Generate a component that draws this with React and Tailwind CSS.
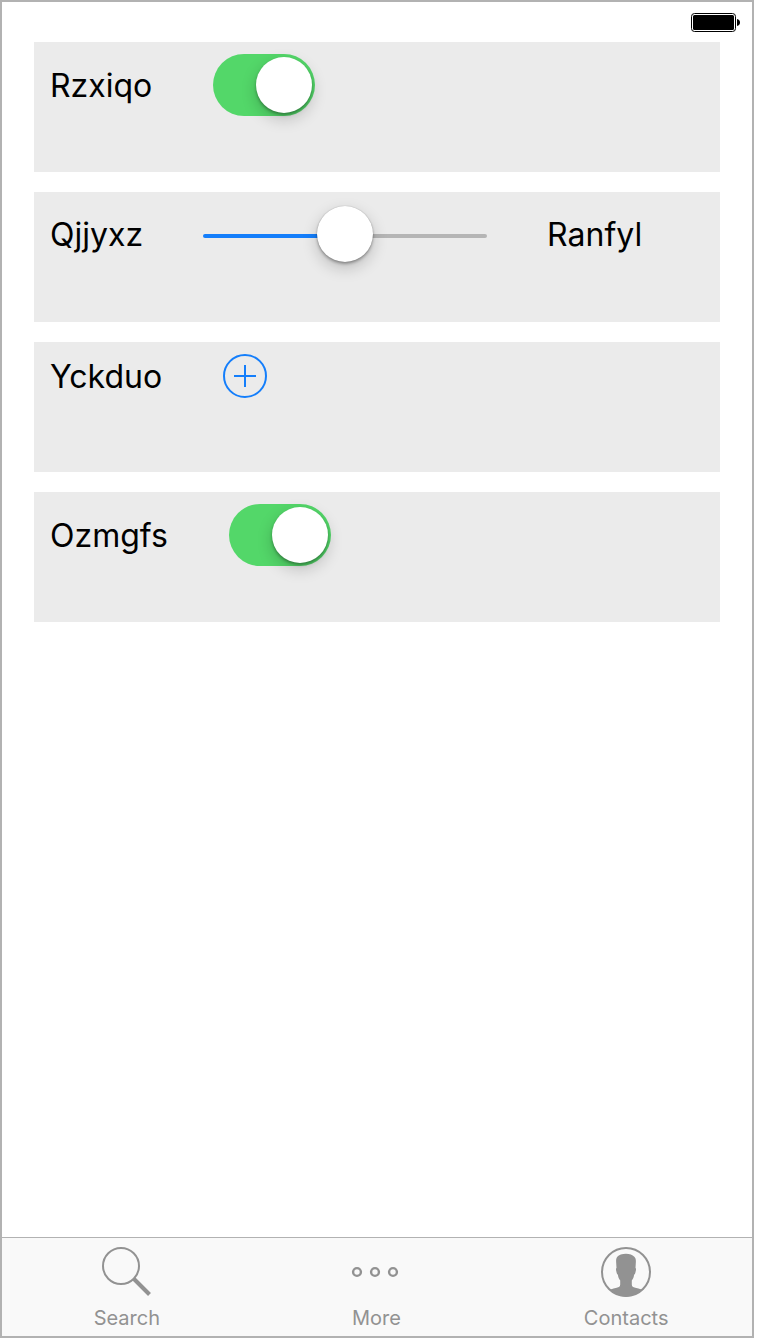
import { useState } from "react";

function Battery() {
  return (
    <svg className="h-5 w-[50px]" viewBox="0 0 50 20" role="img" aria-label="Battery full">
      <rect x="0.5" y="0.5" width="44" height="18" rx="3" fill="#fff" stroke="#000" />
      <rect x="2" y="2" width="41" height="15" rx="1.5" fill="#000" />
      <path d="M46 6c2 .3 3 1.700 3 3.500s-1 3.200-3 3.500z" fill="#000" />
    </svg>
  );
}

function Card({ children }) {
  return <section className="flex min-h-[130px] items-start bg-[#ebebeb] px-4 py-3">{children}</section>;
}

function SwitchRow({ id, label }) {
  const [on, setOn] = useState(true);
  return (
    <Card>
      <div className="flex items-center gap-[61px]">
        <label htmlFor={id} className="pt-0.5">{label}</label>
        <input
          id={id}
          type="checkbox"
          role="switch"
          checked={on}
          onChange={(e) => setOn(e.target.checked)}
          className="h-[62px] w-[102px] shrink-0 cursor-pointer appearance-none rounded-full bg-[#d1d1d6] p-[3px] before:block before:size-14 before:rounded-full before:bg-white before:shadow-[0_6px_16px_rgba(0,0,0,0.2),0_2px_3px_rgba(0,0,0,0.3)] before:transition-transform checked:bg-[#53d769] checked:before:translate-x-10"
        />
      </div>
    </Card>
  );
}

function SliderRow() {
  const [value, setValue] = useState(50);
  return (
    <Card>
      <div className="flex items-start gap-[60px]">
        <label htmlFor="level" className="pt-[11px]">Qjjyxz</label>
        <input
          id="level"
          type="range"
          min="0"
          max="100"
          value={value}
          onChange={(e) => setValue(Number(e.target.value))}
          style={{ "--fill": `${value}%` }}
          className="h-16 w-[284px] min-w-0 cursor-pointer appearance-none bg-transparent [&::-webkit-slider-runnable-track]:h-1 [&::-webkit-slider-runnable-track]:rounded-full [&::-webkit-slider-runnable-track]:bg-[linear-gradient(to_right,#147efb_var(--fill),#b5b5b5_var(--fill))] [&::-webkit-slider-thumb]:-mt-7 [&::-webkit-slider-thumb]:size-14 [&::-webkit-slider-thumb]:appearance-none [&::-webkit-slider-thumb]:rounded-full [&::-webkit-slider-thumb]:bg-white [&::-webkit-slider-thumb]:shadow-[0_0_1px_rgba(0,0,0,0.3),0_6px_16px_rgba(0,0,0,0.2),0_2px_3px_rgba(0,0,0,0.3)]"
        />
        <output htmlFor="level" className="pt-[11px]">Ranfyl</output>
      </div>
    </Card>
  );
}

function AddRow() {
  return (
    <Card>
      <div className="flex items-center gap-[61px]">
        <span id="add-label" className="pt-0.5">Yckduo</span>
        <button type="button" aria-labelledby="add-label" className="cursor-pointer text-[#147efb]">
          <svg className="size-11" viewBox="0 0 44 44" fill="none" stroke="currentColor" strokeWidth="2" aria-hidden="true">
            <circle cx="22" cy="22" r="21" />
            <path d="M11 22h22M22 11v22" />
          </svg>
        </button>
      </div>
    </Card>
  );
}

function SearchIcon() {
  return (
    <svg className="size-[50px]" viewBox="0 0 50 50" fill="none" stroke="currentColor" aria-hidden="true">
      <circle cx="19" cy="19" r="18" strokeWidth="2" />
      <path d="M31.500 31.500L47.500 47.500" strokeWidth="4" />
    </svg>
  );
}

function MoreIcon() {
  return (
    <svg className="size-[50px]" viewBox="0 0 50 50" fill="none" stroke="currentColor" strokeWidth="2.4" aria-hidden="true">
      <circle cx="6" cy="25" r="3.900" />
      <circle cx="24" cy="25" r="3.900" />
      <circle cx="42" cy="25" r="3.900" />
    </svg>
  );
}

function ContactsIcon() {
  return (
    <svg className="size-[50px]" viewBox="0 0 50 50" aria-hidden="true">
      <circle cx="25" cy="25" r="24" fill="none" stroke="currentColor" strokeWidth="2" />
      <path
        d="M25 6.800c-4 0-7 1-8.700 2.900C15 11.300 15 13.500 15.200 16l.3 5c-.8.300-.6 1.800-.2 3.200.4 1.500.7 3.300 1.600 3.600.3 2.500 1 4.200 2.300 5.700v4c0 2-1.200 2.800-3.500 3.200-2.200.4-4.200.8-6.200 1.700C13.500 46.800 19 49.500 25 49.500s11.500-2.700 15.500-7.100c-2-.9-4-1.300-6.200-1.700-2.300-.4-3.500-1.200-3.500-3.200v-4c1.300-1.500 2-3.200 2.300-5.700.9-.3 1.200-2.100 1.600-3.600.4-1.400.6-2.900-.2-3.200l.3-5c.2-2.500.2-4.700-1.500-6.300C31.500 8 28.500 6.800 25 6.800z"
        fill="currentColor"
      />
    </svg>
  );
}

const tabs = [
  { label: "Search", Icon: SearchIcon },
  { label: "More", Icon: MoreIcon },
  { label: "Contacts", Icon: ContactsIcon },
];

export default function App() {
  return (
    <div className="flex min-h-screen flex-col bg-white pr-1.5 pb-0.5 font-['Inter','Liberation_Sans',sans-serif] text-black">
      <div className="flex grow flex-col border-2 border-[#b2b2b2]">
        <header className="flex h-10 items-start justify-end px-[11px] pt-[11px]">
          <Battery />
        </header>
        <main className="flex grow flex-col gap-5 px-8 pb-5 text-[32px] leading-10">
          <SwitchRow id="switch-first" label="Rzxiqo" />
          <SliderRow />
          <AddRow />
          <SwitchRow id="switch-second" label="Ozmgfs" />
        </main>
        <nav className="grid grid-cols-3 border-t border-[#b2b2b2] bg-[#f9f9f9] pr-px text-[#929292]">
          {tabs.map(({ label, Icon }) => (
            <a key={label} href={`#${label.toLowerCase()}`} className="flex flex-col items-center gap-[9px] pt-[9px] pb-[5px] text-xl leading-[25px]">
              <Icon />
              {label}
            </a>
          ))}
        </nav>
      </div>
    </div>
  );
}
